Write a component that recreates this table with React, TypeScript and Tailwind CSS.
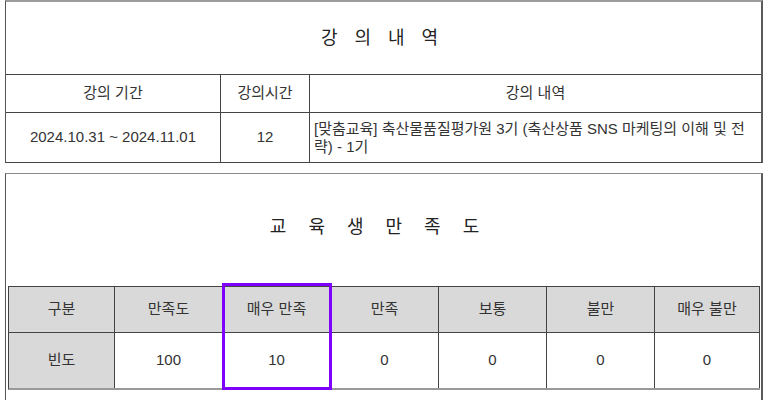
import React from "react";

const font = {
  fontFamily: '"Liberation Sans", "Noto Sans CJK KR", sans-serif',
};

export default function App() {
  const heads = ["구분", "만족도", "매우 만족", "만족", "보통", "불만", "매우 불만"];
  const vals = ["빈도", "100", "10", "0", "0", "0", "0"];
  return (
    <div
      className="relative w-[770px] h-[400px] overflow-hidden bg-white text-[15px] text-[#333]"
      style={font}
    >
      {/* Box 1 */}
      <div className="ml-[5px] w-[758px] border-t-2 border-t-[#9b9b9b] border-l border-l-[#555] border-r-2 border-r-[#5a5a5a] border-b border-b-[#444]">
        <div className="h-[73px] border-b border-b-[#444] flex items-center justify-center gap-[17px] pr-[8px] text-[18px] text-[#222]">
          <span>강</span>
          <span>의</span>
          <span>내</span>
          <span>역</span>
        </div>
        <div className="grid grid-cols-[215px_89px_1fr] h-[38px] border-b border-b-[#444]">
          <div className="border-r border-r-[#444] flex items-center justify-center">강의 기간</div>
          <div className="border-r border-r-[#444] flex items-center justify-center">강의시간</div>
          <div className="flex items-center justify-center">강의 내역</div>
        </div>
        <div className="grid grid-cols-[215px_89px_1fr] h-[49px]">
          <div className="border-r border-r-[#444] flex items-center justify-center">2024.10.31 ~ 2024.11.01</div>
          <div className="border-r border-r-[#444] flex items-center justify-center">12</div>
          <div className="flex items-center pl-[4px] leading-[18px]">
            <div>
              [맞춤교육] 축산물품질평가원 3기 (축산상품 SNS 마케팅의 이해 및 전
              <br />
              략) - 1기
            </div>
          </div>
        </div>
      </div>

      {/* Box 2 */}
      <div className="ml-[5px] mt-[10px] w-[758px] h-[300px] border-t border-t-[#8a8a8a] border-l border-l-[#555] border-r-2 border-r-[#5a5a5a] pl-[2px]">
        <div className="h-[112px] flex items-start justify-center pt-[40px] pr-[20px] text-[18px] text-[#222] gap-[22px]">
          <span>교</span>
          <span>육</span>
          <span>생</span>
          <span>만</span>
          <span>족</span>
          <span>도</span>
        </div>
        <div className="w-[752px] border-l border-l-[#444] border-t border-t-[#444] border-b-2 border-b-[#9a9a9a]">
          <div className="grid grid-cols-[106px_108px_108px_108px_108px_108px_105px] h-[46px] border-b border-b-[#444] bg-[#d9d9d9]">
            {heads.map((h, i) => (
              <div key={i} className="border-r border-r-[#444] flex items-center justify-center">
                {h}
              </div>
            ))}
          </div>
          <div className="grid grid-cols-[106px_108px_108px_108px_108px_108px_105px] h-[55px]">
            {vals.map((v, i) => (
              <div
                key={i}
                className={
                  "border-r border-r-[#444] flex items-center justify-center " +
                  (i === 0 ? "bg-[#d9d9d9]" : "bg-white")
                }
              >
                {v}
              </div>
            ))}
          </div>
        </div>
      </div>

      {/* Highlight */}
      <div className="absolute left-[222px] top-[283px] w-[110px] h-[107px] border-[3px] border-[#7f00ff]" />
    </div>
  );
}
